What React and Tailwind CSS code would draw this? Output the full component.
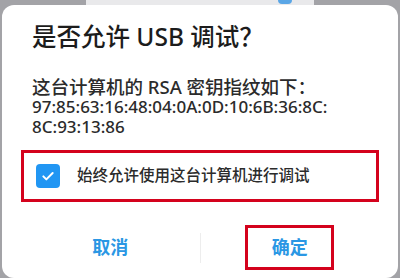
import React from 'react';

const font = { fontFamily: '"Noto Sans", "Noto Sans CJK SC", sans-serif' };

export default function App() {
  return (
    <div className="w-[400px] h-[278px] overflow-hidden bg-[#a3a3a7] flex flex-col" style={font}>
      {/* strip of the screen behind the dialog */}
      <div className="h-[5px] flex shrink-0">
        <div className="w-[86px] bg-[#a3a3a7]" />
        <div className="w-[228px] bg-[#e9e9eb] flex justify-end pr-[22px]">
          <div className="w-[14px] h-[4px] rounded-b-full bg-[#5aa6e6]" />
        </div>
        <div className="flex-1 bg-[#a3a3a7]" />
      </div>

      {/* Dialog */}
      <div className="mx-[2px] flex-1 bg-white rounded-[12px] px-[19px] pt-[17px] pb-[8px] flex flex-col">
        <h1 className="pl-[11px] text-[24.5px] leading-[30px] text-[#1c1c1c] font-medium">
          是否允许 USB 调试？
        </h1>

        <div className="pl-[11px] mt-[25px] text-[17px] leading-[20px] text-[#2b2b2b] font-medium">
          <p className="text-[18.5px]">这台计算机的 RSA 密钥指纹如下：</p>
          <p>97:85:63:16:48:04:0A:0D:10:6B:36:8C:</p>
          <p>8C:93:13:86</p>
        </div>

        <div className="mt-[13px] h-[52px] border-[3px] border-[#d4021d] flex items-center pl-[12px] gap-[17px]">
          <div className="w-[24px] h-[24px] rounded-[4px] bg-[#2196f3] flex items-center justify-center">
            <svg width="16" height="16" viewBox="0 0 24 24" fill="none" stroke="white" strokeWidth="3" strokeLinecap="round" strokeLinejoin="round">
              <path d="M5 12.5l4.5 4.5L19 7.5" />
            </svg>
          </div>
          <span className="text-[15.5px] text-[#2b2b2b] font-medium">始终允许使用这台计算机进行调试</span>
        </div>

        <div className="mt-[23px] h-[45px] flex items-center">
          <div className="flex-1 flex justify-center">
            <span className="text-[18px] font-bold text-[#2a97e4]">取消</span>
          </div>
          <div className="w-px h-[30px] bg-[#ededed]" />
          <div className="flex-1 flex justify-center">
            <div className="w-[89px] h-[45px] border-[3px] border-[#d4021d] flex items-center justify-center">
              <span className="text-[18px] font-bold text-[#2a97e4]">确定</span>
            </div>
          </div>
        </div>
      </div>
    </div>
  );
}
